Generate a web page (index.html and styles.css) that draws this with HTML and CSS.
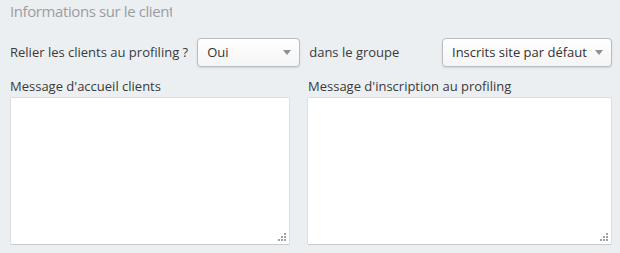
FILE: index.html
```html
<!DOCTYPE html>
<html lang="fr">
<head>
  <meta charset="UTF-8">
  <title>Informations sur le client</title>
  <link rel="stylesheet" href="styles.css">
</head>
<body>
  <div class="panel">
    <h2 class="legend"><span>Informations sur le client</span></h2>

    <div class="row">
      <label class="label-inline">Relier les clients au profiling ?</label>
      <div class="select select-small">
        <span>Oui</span>
        <i class="caret"></i>
      </div>
      <span class="label-inline group-label">dans le groupe</span>
      <div class="select select-group">
        <span>Inscrits site par défaut</span>
        <i class="caret"></i>
      </div>
    </div>

    <div class="messages">
      <div class="field">
        <label>Message d'accueil clients</label>
        <textarea></textarea>
      </div>
      <div class="field">
        <label>Message d'inscription au profiling</label>
        <textarea></textarea>
      </div>
    </div>
  </div>
</body>
</html>
```

FILE: styles.css
```css
html, body {
  margin: 0;
  padding: 0;
  background: #eceff2;
}
body {
  font-family: "Open Sans", Arial, sans-serif;
  font-size: 13px;
  color: #3a3a3a;
}
.panel {
  padding: 0 8px 0 10px;
}
.legend {
  margin: 0;
  padding-top: 1px;
  height: 34px;
  font-size: 15px;
  letter-spacing: -0.4px;
  font-weight: normal;
  color: #9a9da1;
}
.legend span {
  display: inline-block;
  width: 162px;
  white-space: nowrap;
  overflow: hidden;
}
.row {
  display: flex;
  align-items: center;
  height: 30px;
  margin-top: 2px;
}
.label-inline {
  margin-right: 9px;
}
.group-label {
  margin-left: 9px;
  margin-right: 0;
  flex: 1;
}
.select {
  box-sizing: border-box;
  display: flex;
  align-items: center;
  justify-content: space-between;
  height: 29px;
  padding: 0 8px 0 9px;
  border: 1px solid #b9bcc0;
  border-radius: 4px;
  background: linear-gradient(#ffffff, #f4f4f4);
  box-shadow: 0 1px 2px rgba(0, 0, 0, 0.12);
  color: #333;
}
.select-small {
  width: 103px;
}
.select-group {
  width: 170px;
}
.caret {
  width: 0;
  height: 0;
  border-left: 4px solid transparent;
  border-right: 4px solid transparent;
  border-top: 5px solid #8c8f93;
}
.messages {
  display: grid;
  grid-template-columns: 280px 1fr;
  column-gap: 17px;
  margin-top: 10px;
}
.field label {
  display: block;
  height: 20px;
  line-height: 18px;
  padding-left: 0;
}
.field + .field label {
  padding-left: 1px;
}
textarea {
  box-sizing: border-box;
  display: block;
  width: 100%;
  height: 148px;
  margin: 0;
  border: 1px solid #dcdfe2;
  border-bottom-color: #c8cbce;
  border-radius: 2px;
  resize: none;
  background: #fff url("data:image/svg+xml,%3Csvg xmlns='http://www.w3.org/2000/svg' width='8' height='8' fill='%23a0a3a6'%3E%3Crect x='6' y='0' width='2' height='2'/%3E%3Crect x='3' y='3' width='2' height='2'/%3E%3Crect x='6' y='3' width='2' height='2'/%3E%3Crect x='0' y='6' width='2' height='2'/%3E%3Crect x='3' y='6' width='2' height='2'/%3E%3Crect x='6' y='6' width='2' height='2'/%3E%3C/svg%3E") no-repeat right 3px bottom 3px;
}
```
